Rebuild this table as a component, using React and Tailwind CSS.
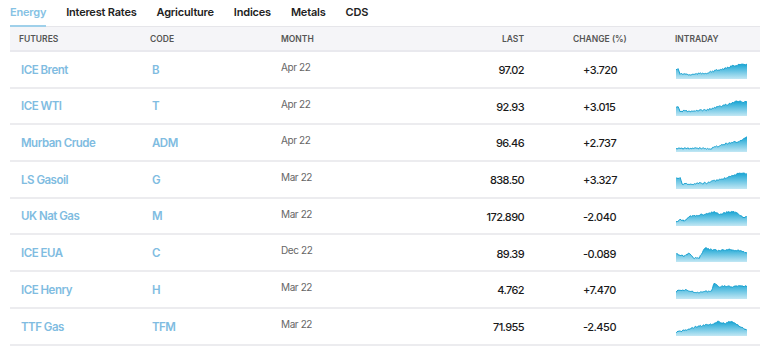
import React from "react";

const tabs = ["Energy", "Interest Rates", "Agriculture", "Indices", "Metals", "CDS"];

// rough shape of each intraday chart: [x 0..1, y 0..1] (0 = top)
const shapes = {
  brent: [[0, 0.45], [0.03, 0.45], [0.06, 0.8], [0.12, 0.78], [0.2, 0.85], [0.3, 0.78], [0.45, 0.7], [0.55, 0.55], [0.7, 0.4], [0.8, 0.2], [0.9, 0.1], [0.95, 0.15], [1, 0.1]],
  wti: [[0, 0.5], [0.03, 0.5], [0.06, 0.85], [0.12, 0.75], [0.2, 0.85], [0.3, 0.75], [0.45, 0.7], [0.55, 0.55], [0.7, 0.35], [0.8, 0.2], [0.88, 0.05], [0.95, 0.15], [1, 0.1]],
  murban: [[0, 0.9], [0.5, 0.88], [0.6, 0.7], [0.75, 0.5], [0.82, 0.4], [0.86, 0.45], [0.93, 0.3], [1, 0.0]],
  gasoil: [[0, 0.35], [0.06, 0.35], [0.09, 0.85], [0.15, 0.75], [0.22, 0.85], [0.3, 0.75], [0.45, 0.7], [0.55, 0.55], [0.7, 0.35], [0.8, 0.15], [0.9, 0.05], [1, 0.05]],
  ukgas: [[0, 0.85], [0.05, 0.7], [0.12, 0.75], [0.2, 0.45], [0.35, 0.35], [0.45, 0.3], [0.52, 0.1], [0.6, 0.3], [0.72, 0.15], [0.8, 0.1], [0.88, 0.25], [0.93, 0.5], [1, 0.5]],
  eua: [[0, 0.55], [0.1, 0.7], [0.18, 0.55], [0.25, 0.85], [0.33, 0.85], [0.4, 0.15], [0.5, 0.25], [0.6, 0.35], [0.7, 0.25], [0.85, 0.3], [0.93, 0.35], [1, 0.55]],
  henry: [[0, 0.65], [0.05, 0.5], [0.2, 0.55], [0.3, 0.7], [0.38, 0.65], [0.5, 0.55], [0.54, 0.0], [0.6, 0.25], [0.7, 0.2], [0.8, 0.3], [0.9, 0.2], [1, 0.25]],
  ttf: [[0, 0.9], [0.05, 0.8], [0.15, 0.7], [0.3, 0.45], [0.45, 0.35], [0.55, 0.25], [0.6, 0.1], [0.68, 0.25], [0.78, 0.1], [0.85, 0.3], [0.92, 0.55], [1, 0.7]],
};

const rows = [
  { name: "ICE Brent", code: "B", month: "Apr 22", last: "97.02", change: "+3.720", chart: "brent" },
  { name: "ICE WTI", code: "T", month: "Apr 22", last: "92.93", change: "+3.015", chart: "wti" },
  { name: "Murban Crude", code: "ADM", month: "Apr 22", last: "96.46", change: "+2.737", chart: "murban" },
  { name: "LS Gasoil", code: "G", month: "Mar 22", last: "838.50", change: "+3.327", chart: "gasoil" },
  { name: "UK Nat Gas", code: "M", month: "Mar 22", last: "172.890", change: "-2.040", chart: "ukgas" },
  { name: "ICE EUA", code: "C", month: "Dec 22", last: "89.39", change: "-0.089", chart: "eua" },
  { name: "ICE Henry", code: "H", month: "Mar 22", last: "4.762", change: "+7.470", chart: "henry" },
  { name: "TTF Gas", code: "TFM", month: "Mar 22", last: "71.955", change: "-2.450", chart: "ttf" },
];

function Spark({ id, seed }) {
  const W = 71;
  const H = 17;
  const pts = shapes[id];
  let s = seed * 97 + 13;
  const rand = () => {
    s = (s * 9301 + 49297) % 233280;
    return s / 233280;
  };
  const out = [];
  for (let i = 0; i <= 70; i++) {
    const t = i / 70;
    let k = 0;
    while (k < pts.length - 2 && pts[k + 1][0] < t) k++;
    const [x0, y0] = pts[k];
    const [x1, y1] = pts[k + 1];
    const f = x1 === x0 ? 0 : (t - x0) / (x1 - x0);
    const y = y0 + (y1 - y0) * Math.min(1, Math.max(0, f));
    const jitter = (rand() - 0.5) * 0.12;
    const yy = Math.min(1, Math.max(0, y + jitter));
    out.push([t * W, 1 + yy * (H - 3)]);
  }
  const line = out.map((p, i) => `${i ? "L" : "M"}${p[0].toFixed(1)},${p[1].toFixed(1)}`).join(" ");
  const area = `${line} L${W},${H} L0,${H} Z`;
  return (
    <svg width={W} height={H} viewBox={`0 0 ${W} ${H}`}>
      <defs>
        <linearGradient id={`g-${id}`} x1="0" y1="0" x2="0" y2="1">
          <stop offset="0%" stopColor="#17a5d4" />
          <stop offset="100%" stopColor="#c2e7f4" />
        </linearGradient>
      </defs>
      <path d={area} fill={`url(#g-${id})`} />
      <path d={line} fill="none" stroke="#16a0d0" strokeWidth="1" />
    </svg>
  );
}

const cols = "grid grid-cols-[140px_131px_146px_97px_49px_102px_1fr] items-center";

export default function App() {
  return (
    <div className="w-[760px] h-[358px] bg-white overflow-hidden font-['Inter',sans-serif]">
      {/* tabs */}
      <div className="ml-[10px] flex items-end h-[27px] border-b border-[#e6e6ea] gap-[20px]">
        {tabs.map((t, i) => (
          <div
            key={t}
            className={
              i === 0
                ? "h-full flex items-center text-[11px] font-semibold tracking-[-0.2px] text-[#85c2e4] border-b-2 border-[#9fd0ea] -mb-px pb-[2px]"
                : "h-full flex items-center text-[11px] font-semibold tracking-[-0.2px] text-[#222] pb-[2px]"
            }
          >
            {t}
          </div>
        ))}
      </div>

      <div className="ml-[10px]">
        <div className={`${cols} h-[25px] pt-[1px] bg-[#f5f5f8] border-b-2 border-[#e9e9ee] text-[8.5px] font-semibold text-[#555]`}>
          <div className="pl-[9px]">FUTURES</div>
          <div>CODE</div>
          <div>MONTH</div>
          <div className="text-right">LAST</div>
          <div />
          <div>CHANGE (%)</div>
          <div>INTRADAY</div>
        </div>

        {rows.map((r, i) => (
          <div key={r.name} className={`${cols} h-[36.7px] pt-[2px] border-b-2 border-[#ececef]`}>
            <div className="pl-[11px] text-[11.5px] font-semibold tracking-[-0.5px] text-[#80bce1]">{r.name}</div>
            <div className="pl-[2px] text-[11.5px] font-semibold tracking-[-0.5px] text-[#80bce1]">{r.code}</div>
            <div className="text-[10px] tracking-[-0.4px] text-[#666] mb-[6px]">{r.month}</div>
            <div className="text-right text-[11px] font-medium tracking-[-0.6px] text-[#1a1a1a]">{r.last}</div>
            <div />
            <div className="pl-[10px] text-[11px] font-medium tracking-[-0.5px] text-[#1a1a1a]">{r.change}</div>
            <div className="pl-[1px] flex">
              <Spark id={r.chart} seed={i + 1} />
            </div>
          </div>
        ))}
      </div>
    </div>
  );
}
